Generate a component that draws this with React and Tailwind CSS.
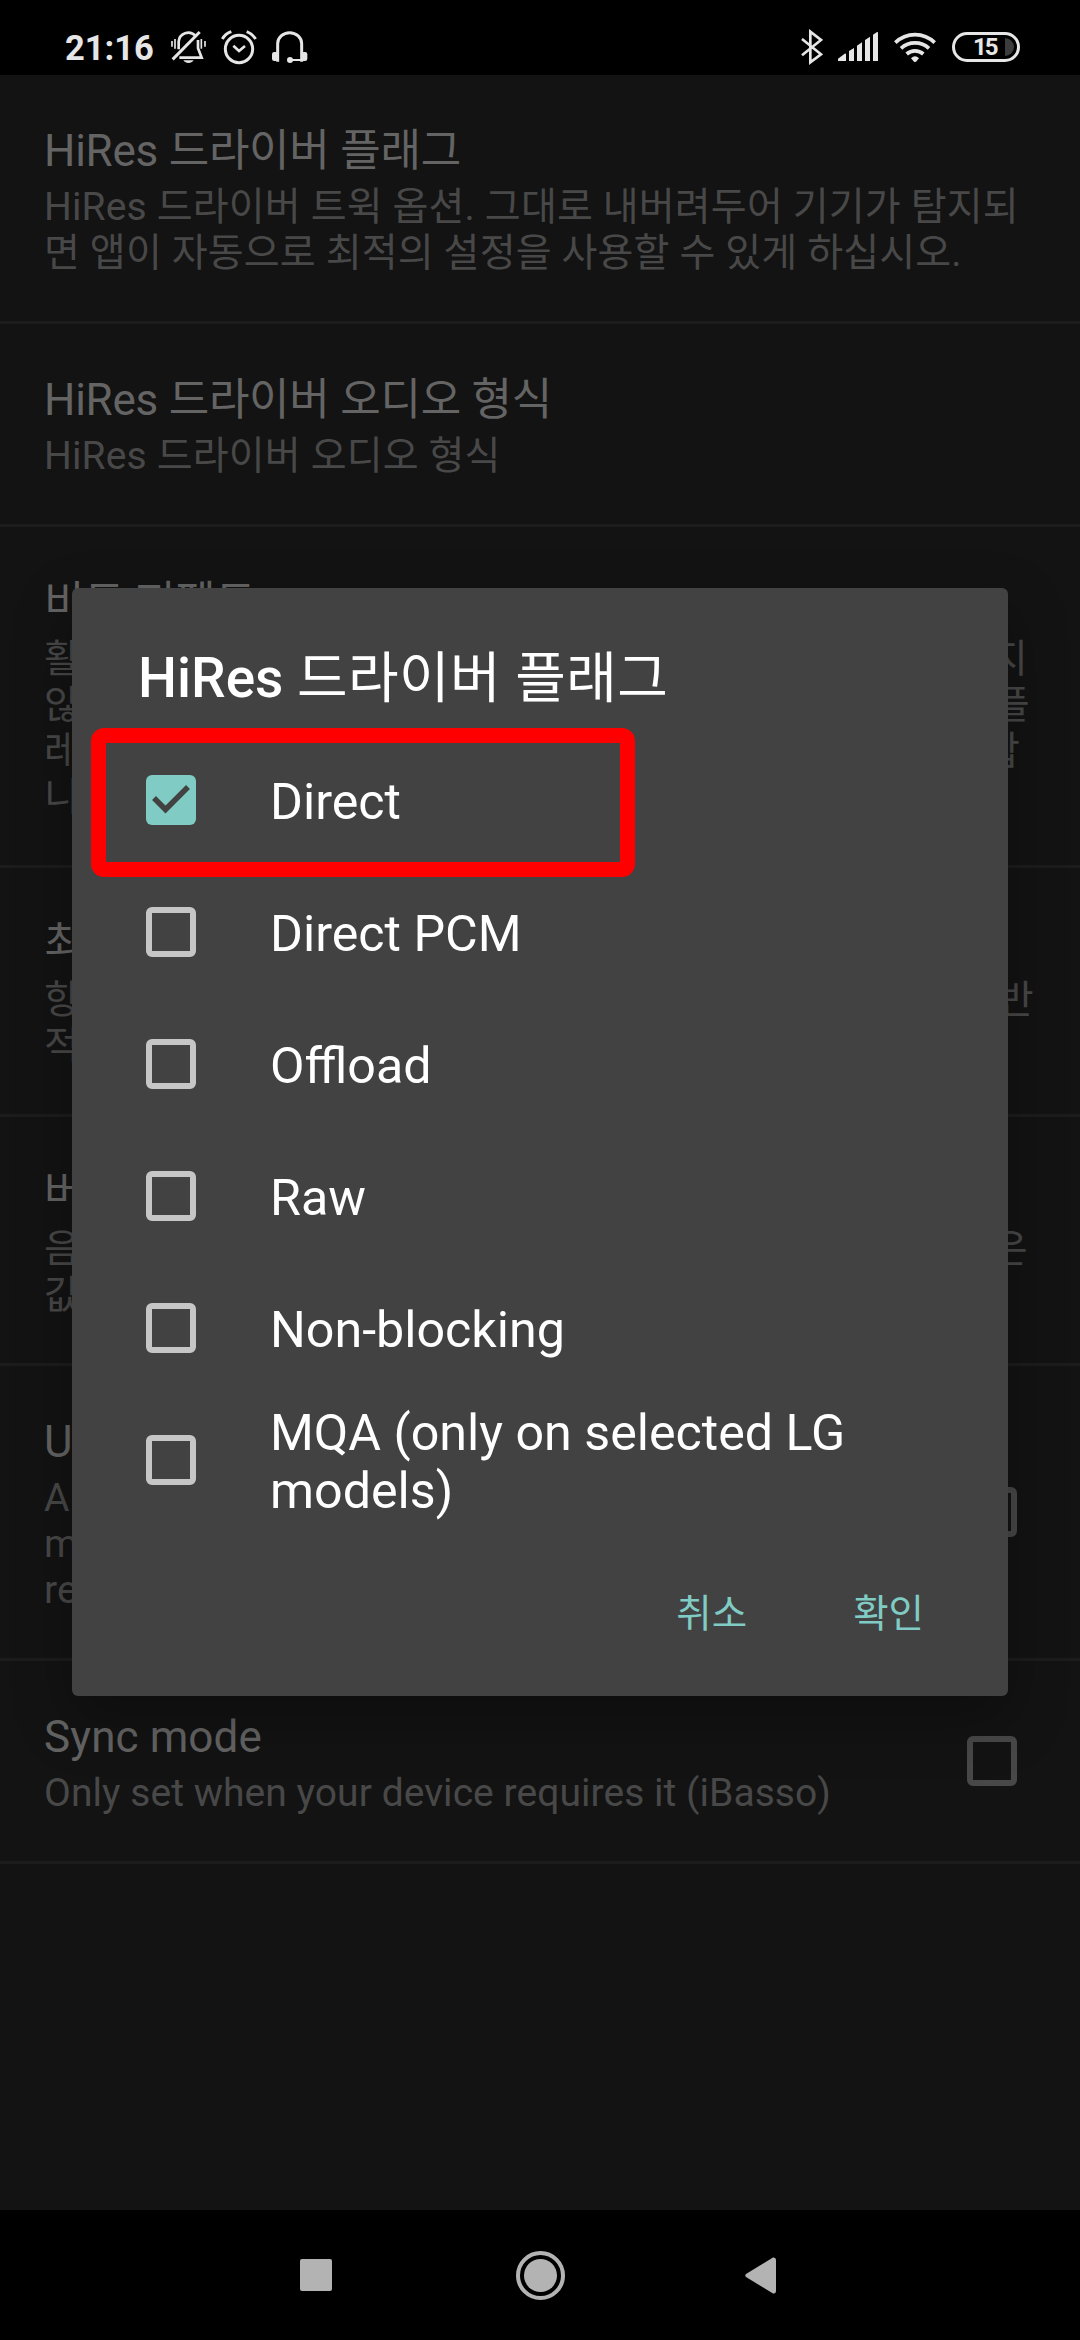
import { useState } from 'react';
import clsx from 'clsx';

const settings = [
  {
    title: 'HiRes 드라이버 플래그',
    lines: ['HiRes 드라이버 트윅 옵션. 그대로 내버려두어 기기가 탐지되', '면 앱이 자동으로 최적의 설정을 사용할 수 있게 하십시오.']
  },
  { title: 'HiRes 드라이버 오디오 형식', lines: ['HiRes 드라이버 오디오 형식'] },
  {
    title: '비트 퍼펙트',
    lines: [
      '활성화하면, 앱에서는 음량조절과 효과적용을 처리하려고하지',
      '않습니다 음악파일의 원본신호를 그대로 출력하려는경우에 플',
      '레이어의 기본음량은 하드웨어에서만 조절할수있도록해야 합',
      '니다.'
    ]
  },
  { title: '최대 볼륨', lines: ['항상 최대 볼륨을 사용합니다. 외장 앰프를 연결한 경우에 일반', '적으로 사용합니다.'] },
  { title: '버퍼 크기', lines: ['음악재생이 끊어지는경우, 버퍼크기를 늘려보십시오 가장높은', '값은 지연을 늘립니다.'] },
  {
    title: 'USB exclusive mode',
    lines: ['Allow the driver to use the exclusive', 'mode when the connected device', 'requires it'],
    checkbox: true
  },
  { title: 'Sync mode', lines: ['Only set when your device requires it (iBasso)'], checkbox: true }
];

const options = ['Direct', 'Direct PCM', 'Offload', 'Raw', 'Non-blocking', 'MQA (only on selected LG models)'];

function BellOffIcon() {
  return (
    <svg width="37" height="36" viewBox="0 0 111 108" fill="none" stroke="#e6e6e6" strokeWidth="8">
      <path d="M26 61V38A29 29 0 0 1 76 20" />
      <path d="M84 33V58L95 86H28" />
      <path d="M8 91L89 9" strokeWidth="9" />
      <path d="M6 36v17M105 36v17" strokeWidth="5" />
      <path d="M15 30v29M94 30v29" strokeWidth="5" />
      <path d="M40 94h31c-4 6-9 8-15.500 8s-11.500-2-15.500-8z" fill="#e6e6e6" stroke="none" />
    </svg>
  );
}

function AlarmIcon() {
  return (
    <svg width="38" height="36" viewBox="0 0 114 108" fill="none" stroke="#e6e6e6" strokeWidth="9">
      <circle cx="57" cy="60" r="41" />
      <path d="M40 50L57 66L75 51" strokeWidth="8" />
      <path d="M7 30Q16 14 34 8M80 8Q96 14 107 30" />
    </svg>
  );
}

function HeadsetIcon() {
  return (
    <svg width="37" height="36" viewBox="0 0 111 108" fill="none" stroke="#e6e6e6" strokeWidth="9">
      <path d="M20 98V44A36 33 0 0 1 92 44V98" />
      <rect x="3" y="69" width="18" height="27" rx="7" fill="#e6e6e6" stroke="none" />
      <rect x="91" y="69" width="18" height="27" rx="7" fill="#e6e6e6" stroke="none" />
      <circle cx="57" cy="93" r="9" fill="#e6e6e6" stroke="none" />
      <path d="M57 93H92" strokeWidth="6" />
    </svg>
  );
}

function BluetoothIcon() {
  return (
    <svg width="23" height="36" viewBox="0 0 69 108" fill="none" stroke="#e6e6e6" strokeWidth="8">
      <path d="M6 30L63 76L31 100V8L63 33L6 79" />
    </svg>
  );
}

function SignalIcon() {
  return (
    <svg width="42" height="36" viewBox="0 0 126 108" fill="#e6e6e6">
      <path d="M3 96V89L23 74Q27 72 27 76V96z" />
      <path d="M36 96V66L51 57V96z" />
      <path d="M60 96V50L75 40V96z" />
      <path d="M84 96V33L99 23V96z" />
      <path d="M108 96V17L120 9Q123 8 123 12V96z" />
    </svg>
  );
}

function WifiIcon() {
  return (
    <svg width="44" height="36" viewBox="0 0 132 108" fill="none" stroke="#e6e6e6" strokeWidth="11">
      <path d="M7 41A84 84 0 0 1 125 41" />
      <path d="M24 58A62 62 0 0 1 108 58" />
      <path d="M41 75A38 38 0 0 1 91 75" />
      <path d="M54 88Q66 76 78 88L69 98Q66 100 63 98z" fill="#e6e6e6" stroke="none" />
    </svg>
  );
}

function StatusBar() {
  return (
    <div className="flex h-[75px] items-center bg-black pt-[19px] pr-[60px] pl-[65px] text-[#e6e6e6]">
      <div className="w-[105px] pt-[2px] text-[34.5px] leading-[36px] font-bold">21:16</div>
      <div className="flex gap-[13px]">
        <BellOffIcon />
        <AlarmIcon />
        <HeadsetIcon />
      </div>
      <div className="ml-auto flex items-center gap-[14px]">
        <BluetoothIcon />
        <SignalIcon />
        <WifiIcon />
        <div className="ml-px flex h-[30px] w-[68px] items-center rounded-full border-3 border-[#e6e6e6] pl-[18px]">
          <span className="w-[32px] text-[24px] leading-[24px] font-bold tracking-[-2px]">15</span>
          <span className="h-[18px] w-[9px] rounded-r-full bg-[#3c3c3c]" />
        </div>
      </div>
    </div>
  );
}

function SettingRow({ item }) {
  // hangul titles are set a little tighter
  const latin = /^[\x20-\x7e]+$/.test(item.title);

  return (
    <div className="flex items-center border-b-3 border-[#1c1c1c] pt-[50px] pr-[63px] pb-[45px] pl-[44px]">
      <div className="flex-1">
        <div className={clsx('pb-[7px] text-[44px] leading-[52px] text-[#646464]', latin ? 'tracking-[0.1px]' : 'tracking-[-0.25px]')}>
          {item.title}
        </div>
        {item.lines.map(line => (
          <div
            key={line}
            className={clsx('text-[39px] leading-[46px] whitespace-nowrap text-[#484848]', latin ? 'tracking-[0.05px]' : 'tracking-[0.15px]')}
          >
            {line}
          </div>
        ))}
      </div>
      {item.checkbox && <div className="mb-[5px] h-[50px] w-[50px] rounded-[6px] border-6 border-[#484848]" />}
    </div>
  );
}

function CheckBox({ checked }) {
  if (!checked) {
    return <span className="h-[50px] w-[50px] shrink-0 rounded-[6px] border-6 border-[#c6c6c6]" />;
  }
  return (
    <span className="h-[50px] w-[50px] shrink-0 rounded-[6px] bg-[#80cbc4]">
      <svg width="50" height="50" viewBox="0 0 50 50" fill="none" stroke="#424242" strokeWidth="5.500">
        <path d="M8 23L19.500 34.500L42 12" />
      </svg>
    </span>
  );
}

function FlagsDialog() {
  const [selected, setSelected] = useState(['Direct']);

  const toggle = name => {
    setSelected(prev => (prev.includes(name) ? prev.filter(n => n !== name) : [...prev, name]));
  };

  return (
    <div className="absolute top-[588px] left-[72px] flex h-[1108px] w-[936px] flex-col rounded-[6px] bg-[#424242] text-white shadow-[0_22px_60px_rgba(0,0,0,0.3)]">
      <h2 className="h-[146px] pt-[58px] pl-[66px] text-[55px] leading-[64px] font-medium">
        HiRes <span className="font-normal tracking-[0.4px]">드라이버 플래그</span>
      </h2>
      <div>
        {options.map(name => (
          <div key={name} className="flex h-[132px] items-center gap-[74px] pr-[66px] pl-[74px]" onClick={() => toggle(name)}>
            <CheckBox checked={selected.includes(name)} />
            <span className="pt-[4px] text-[50.2px] leading-[58px]">{name}</span>
          </div>
        ))}
      </div>
      <div className="flex justify-end gap-[106px] pt-[65px] pr-[84px] text-[38.5px] leading-[46px] text-[#80cbc4]">
        <button>취소</button>
        <button>확인</button>
      </div>
      {/* highlight around the first option */}
      <div className="pointer-events-none absolute top-[140px] left-[19px] h-[149px] w-[544px] rounded-[13px] border-15 border-[#ff0000]" />
    </div>
  );
}

function NavBar() {
  return (
    <div className="flex h-[130px] items-center bg-black pl-[300px]">
      <div className="h-[32px] w-[32px] rounded-[2px] bg-[#b3b3b3]" />
      <div className="ml-[184px] flex h-[49px] w-[49px] items-center justify-center rounded-full border-4 border-[#b3b3b3]">
        <div className="h-[33px] w-[33px] rounded-full bg-[#b3b3b3]" />
      </div>
      <svg className="ml-[180px]" width="31" height="37" viewBox="0 0 31 37" fill="#b3b3b3">
        <path d="M1 17L28 .5Q31 0 31 3V34Q31 37 28 36.500L1 20Q-.5 18.500 1 17z" />
      </svg>
    </div>
  );
}

export default function App() {
  return (
    <div className="relative flex h-[2340px] w-[1080px] flex-col overflow-hidden bg-[#131313] font-['Roboto','Noto_Sans_CJK_KR',sans-serif]">
      <StatusBar />
      <div className="flex-1">
        {settings.map(item => (
          <SettingRow key={item.title} item={item} />
        ))}
      </div>
      <NavBar />
      <FlagsDialog />
    </div>
  );
}
